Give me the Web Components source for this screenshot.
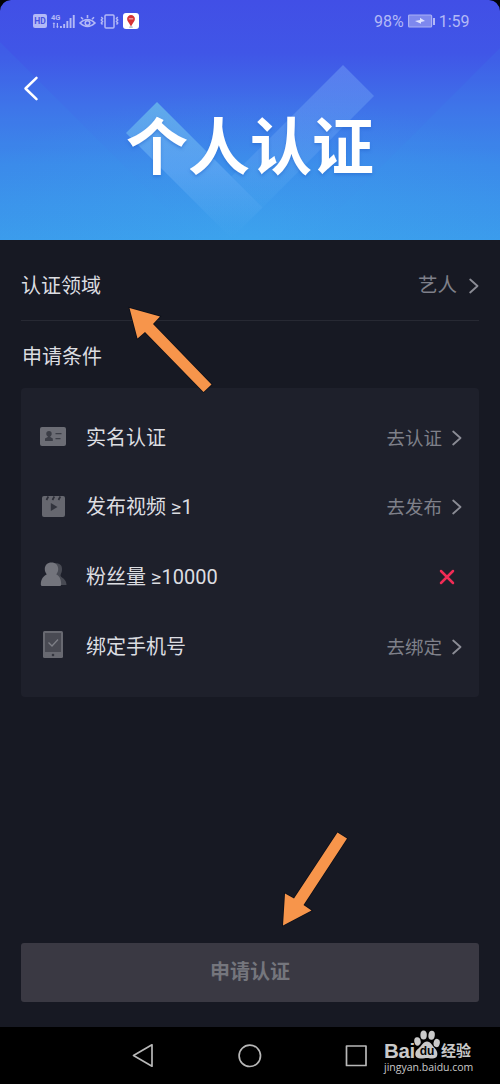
<!DOCTYPE html>
<html lang="zh-CN">
<head>
<meta charset="utf-8">
<title>个人认证</title>
<style>
html,body{margin:0;padding:0;background:#000}
body{width:500px;height:1084px;overflow:hidden;font-family:Roboto,"Noto Sans CJK SC",sans-serif;color:#dcdde1}
</style>
</head>
<body>
<cert-page></cert-page>
<script>
const define = (name, html) => {
  const t = document.createElement('template');
  t.innerHTML = html;
  customElements.define(name, class extends HTMLElement {
    constructor() {
      super();
      this.attachShadow({mode: 'open'}).appendChild(t.content.cloneNode(true));
    }
  });
};

define('status-bar', `
<style>
:host{display:flex;box-sizing:border-box;height:42px;padding:0 30.5px 0 33px;justify-content:space-between;align-items:center;color:#b3b9f6;font-size:16px;line-height:20px}
.right{display:flex;align-items:center;gap:4px}
.right span{padding-top:1px}
svg{display:block;flex:none}
.hd{display:flex;align-items:center;justify-content:center;width:14px;height:14px;border-radius:2px;background:#b3b9f6;color:#4652e2;font-size:8.500px;font-weight:700;line-height:14px}
.left{display:flex;align-items:center}
.g{width:24px;margin:0 4px 0 4px;display:grid;grid-template-columns:1fr}
.g>*{grid-area:1/1}
.g span{font-size:7.500px;line-height:7px;font-weight:700;align-self:start}
</style>
<div class="left">
  <span class="hd">HD</span>
  <span class="g"><span>4G</span>
  <svg width="24" height="15" viewBox="0 0 24 15" fill="#b3b9f6"><path d="M1.500 10L2.900 8.300 4.300 10H3.500v4H2.300v-4zM5.800 9H7v3.500h.8L6.400 14.300 5 12.500h.8z"/><path d="M9 12h1.900v2H9zM12.200 10h1.900v4h-1.900zM15.400 7h1.900v7h-1.900zM18.600 4h1.900v10h-1.900zM21.800 1h1.900v13h-1.900z"/></svg></span>
  <svg width="17" height="15" viewBox="0 0 17 15" fill="none" stroke="#b3b9f6" stroke-width="1.600"><path d="M1 9Q8.500 2 16 9Q8.500 16 1 9zM2 3.300l2 2M8.500 1v3M15 3.300l-2 2"/><circle cx="8.500" cy="9" r="2.300"/></svg>
  <svg style="margin-left:4px" width="19" height="15" viewBox="0 0 19 15" fill="none" stroke="#b3b9f6" stroke-width="1.500"><rect x="5" y="1" width="9" height="13" rx="1"/><path d="M1.300 3l1.200 1.500-1.200 1.500 1.200 1.500-1.200 1.500 1.200 1.500M17.700 3l-1.200 1.500 1.200 1.500-1.200 1.500 1.200 1.500-1.200 1.500"/></svg>
  <svg style="margin-left:4px" width="16" height="16" viewBox="0 0 16 16"><rect width="16" height="16" rx="3" fill="#fff"/><path d="M8 2a3.900 3.900 0 0 1 3.900 4C11.900 8.400 9.600 10 8 13.500 6.400 10 4.100 8.400 4.100 6A3.900 3.900 0 0 1 8 2z" fill="#d63337"/><path d="M5.800 5.800h4.400" stroke="#f3a2a2" stroke-width="1.300"/><ellipse cx="8" cy="14" rx="2" ry=".6" fill="#8090a0"/></svg>
</div>
<div class="right"><span>98%</span>
<svg width="27" height="14" viewBox="0 0 27 14"><rect x=".6" y="1" width="23" height="12" rx="1" fill="#7e88ee" stroke="#a9b0f4" stroke-width="1.200"/><rect x="25" y="4" width="2" height="7" fill="#b3b9f6"/><path d="M7 7l5-1V3.800l5 3.200-4 1v1.800z" fill="#dfe2ff"/></svg>
<span>1:59</span></div>`);

define('hero-header', `
<style>
:host{display:grid;height:240px;overflow:hidden;background:linear-gradient(180deg,#414fe6 0%,#4056e7 22%,#3f70e9 44%,#3c88ea 68%,#3b9bec 100%)}
:host>*{grid-area:1/1}
.bg,.back{display:block}
.content{display:flex;flex-direction:column}
.back{margin:34px 0 0 23px}
h1{margin:10px 0 0;text-align:center;font:700 62px/62px "Noto Sans CJK SC",sans-serif;white-space:nowrap;color:#fff;text-shadow:0 2px 3px #2869cf88}
</style>
<svg class="bg" width="500" height="240" viewBox="0 0 500 240">
<defs>
<linearGradient id="r" x1="0" y1="0" x2="0" y2="1"><stop offset="0" stop-color="#84b3fa" stop-opacity=".38"/><stop offset=".65" stop-color="#71acf5" stop-opacity=".28"/><stop offset="1" stop-color="#71c4f5" stop-opacity="0.040"/></linearGradient>
<linearGradient id="l" x1="0" y1="0" x2="0" y2="1"><stop offset="0" stop-color="#72cbea" stop-opacity=".65"/><stop offset=".5" stop-color="#7bbafa" stop-opacity=".4"/><stop offset=".9" stop-color="#71baf5" stop-opacity="0.050"/><stop offset="1" stop-color="#71baf5" stop-opacity="0"/></linearGradient>
<radialGradient id="c" cx=".5" cy="1" r=".62"><stop offset="0" stop-color="#3eb6ef" stop-opacity=".3"/><stop offset="1" stop-color="#3cb0ee" stop-opacity="0"/></radialGradient>
</defs>
<path d="M0 42L198 240H0zM500 48L308 240H500z" fill="#3c9cf0" opacity=".1"/>
<rect width="500" height="240" fill="url(#c)"/>
<path d="M343 65L374 96 262.500 207.500 231.500 176.500z" fill="url(#r)"/>
<path d="M157 102L262.500 207.500 231.500 238.500 126 133z" fill="url(#l)"/>
<path d="M0 11V0H11Q1 1 0 11zM500 11V0H489Q499 1 500 11z" fill="#020308"/>
</svg>
<div class="content">
<status-bar></status-bar>
<svg class="back" width="16" height="26" viewBox="0 0 16 26" fill="none" stroke="#fff" stroke-width="2.500" stroke-linecap="round" stroke-linejoin="round"><path d="M13.500 1.800L2.500 12.500l11 10.700"/></svg>
<h1>个人认证</h1>
</div>`);

define('chevron-right', `
<style>:host{display:block;width:10px;height:16px}svg{display:block}</style>
<svg width="10" height="16" viewBox="0 0 10 16" fill="none" stroke="#8b8c95" stroke-width="1.800" stroke-linecap="round" stroke-linejoin="round"><path d="M1.200 1.500L8.500 8l-7.300 6.500"/></svg>`);

define('field-row', `
<style>
:host{display:flex;box-sizing:border-box;height:81px;margin:0 21px;padding:12px 0 0 0;justify-content:space-between;align-items:center;border-bottom:1px solid #272933;font-size:20px;line-height:30px}
.v{display:flex;align-items:center;gap:12px;font-size:19.500px;color:#7f808a}
</style>
<slot name="label"></slot><span class="v"><slot></slot><chevron-right></chevron-right></span>`);

define('condition-row', `
<style>
:host{display:flex;align-items:center;height:69.600px;font-size:20px;line-height:30px}
.i{display:flex;width:28px;justify-content:center;margin-right:19px;position:relative;top:-1px}
.l{flex:1;white-space:pre}
.v{display:flex;align-items:center;gap:10px;font-size:18.500px;color:#7f808a}
::slotted(span){padding-top:2px}
::slotted(svg){display:block}
</style>
<span class="i"><slot name="icon"></slot></span><span class="l"><slot></slot></span><span class="v"><slot name="action"></slot></span>`);

define('condition-card', `
<style>:host{display:block;box-sizing:border-box;height:309px;margin:0 21px;padding:15px 17px 0 18px;border-radius:4px;background:#1e202b}</style><slot></slot>`);

define('submit-button', `
<style>:host{display:block;margin:246px 21px 0}
button{display:block;width:100%;height:59px;border:0;border-radius:3px;background:#3a3943;color:#75767d;font:700 20px/55px "Noto Sans CJK SC",sans-serif;padding:0 0 4px}</style>
<button><slot></slot></button>`);

define('baidu-mark', `
<style>
:host{display:block;width:92px;color:#c9c9c9}
.top{display:flex;height:29px;align-items:flex-end}
.b{font:700 20.500px/20px "Liberation Sans",sans-serif;width:30px;letter-spacing:-.3px;padding-top:2px;height:18px}
.p{display:grid;width:26px;height:29px;justify-items:center}
.p>*{grid-area:1/1}
.p span{color:#050505;font:700 12px/14px "Liberation Sans",sans-serif;align-self:end;margin-bottom:1px;z-index:1}
.j{font:700 15px/15px "Noto Sans CJK SC",sans-serif;margin:0 0 2px 1px;white-space:nowrap}
.u{font:10.500px/14px "Open Sans","Noto Sans",sans-serif;white-space:nowrap;margin-top:1px}
svg{display:block}
</style>
<div class="top"><span class="b">Bai</span><span class="p">
<svg width="26" height="29" viewBox="0 0 26 29" fill="#c9c9c9"><ellipse cx="3.500" cy="11.500" rx="3.200" ry="4.200" transform="rotate(-10 3.500 11.500)"/><ellipse cx="9.600" cy="5" rx="3.200" ry="4.500"/><ellipse cx="17.600" cy="5.300" rx="3.200" ry="4.500" transform="rotate(8 17.600 5.300)"/><ellipse cx="22.700" cy="13" rx="3.100" ry="4.200" transform="rotate(12 22.700 13)"/><path d="M13 11.500c4 0 5 4 8 7s4 9.500-2 10c-3 .3-4-.5-6-.5s-4 .8-7 .5C0 28 0 21.500 4.500 18.500 8 15.500 9 11.500 13 11.500z"/></svg><span>du</span></span><span class="j">经验</span></div>
<div class="u">jingyan.baidu.com</div>`);

define('nav-bar', `
<style>
:host{display:flex;height:57px;margin-top:25px;background:#000}
svg{display:block}
baidu-mark{margin:3px 0 0 10px}
</style>
<svg width="374" height="57" viewBox="0 0 374 57" fill="none" stroke="#b8b8b8" stroke-width="1.700" stroke-linejoin="round"><path d="M152 17.800V39.200L133.500 28.500z"/><circle cx="249.800" cy="28.800" r="10.700"/><rect x="346.500" y="19" width="19.500" height="19.500"/></svg>
<baidu-mark></baidu-mark>`);

define('pointer-arrows', `
<style>:host{position:absolute;left:0;top:0;pointer-events:none}svg{display:block}</style>
<svg width="500" height="1084" viewBox="0 0 500 1084" fill="#f7954b" stroke="#090b16" stroke-opacity=".7" stroke-width="1.600" paint-order="stroke"><path d="M129.500 308L160 316.500 153 324 211.500 384.500 203.500 392 145 332 137.500 338.500z"/><path d="M283 925.500L285 893.500 294 898.500 337.500 832.500 347 838.500 303.500 905 311.500 910.500z"/></svg>`);

define('cert-page', `
<style>
:host{display:block;position:relative;width:500px;height:1084px;overflow:hidden;background:#171923}
h2{box-sizing:border-box;height:67px;margin:0;padding:21px 22px 0;font-size:20px;line-height:30px;font-weight:400}
</style>
<hero-header></hero-header>
<field-row><span slot="label">认证领域</span>艺人</field-row>
<h2>申请条件</h2>
<condition-card>
<condition-row><svg slot="icon" width="26" height="19" viewBox="0 0 26 19"><rect width="26" height="19" rx="2" fill="#6c6d75"/><circle cx="9" cy="6.800" r="2.700" fill="#3b3d46"/><path d="M7.800 8h2.500v2l2.500 1.500V14H5v-2.500L7.800 10zM15.500 6h6v1.300h-6zM15.500 11h5v1.300h-5z" fill="#3b3d46"/></svg>实名认证<span slot="action">去认证</span><chevron-right slot="action"></chevron-right></condition-row>
<condition-row><svg slot="icon" width="23" height="21" viewBox="0 0 23 21"><rect width="23" height="21" rx="2" fill="#66676f"/><path d="M4.500 4L6.300.5M10.500 4L12.300.5M16.500 4L18.300.5" stroke="#2c2e38" stroke-width="1.700"/><path d="M8.800 7L15.500 11l-6.700 4z" fill="#32343d"/></svg>发布视频 ≥1<span slot="action">去发布</span><chevron-right slot="action"></chevron-right></condition-row>
<condition-row><svg slot="icon" width="27" height="25" viewBox="0 0 27 25" style="position:relative;top:-1px"><path d="M13 1.500c6-1 9.500 1 9 6.500-.2 3-1.500 4-1.500 5.500 0 2 6 3 6 9.500H16z" fill="#484a53"/><path d="M11.500.5c4 0 6.700 2.700 6.700 6.700 0 2.500-1.200 4-2 5 3 1.500 5 4.500 5 10.300q0 1.500-1.500 1.500H2.200Q.8 24 .8 22.500c0-5.800 3-8.800 6-10.300-.8-1-2-2.500-2-5 0-4 2.700-6.700 6.700-6.700z" fill="#73747c"/></svg>粉丝量 ≥10000<svg slot="action" style="margin-right:7px" width="16" height="16" viewBox="0 0 16 16" fill="none" stroke="#f12c56" stroke-width="2.500" stroke-linecap="round"><path d="M2 2l12 12M14 2L2 14"/></svg></condition-row>
<condition-row><svg slot="icon" width="20" height="27" viewBox="0 0 20 27" style="position:relative;top:-1px"><rect width="20" height="27" rx="1.500" fill="#686971"/><rect x="2" y="2" width="16" height="19" fill="#494a53"/><path d="M5.500 11.500l3.500 3.500 6-6.500" stroke="#7e7f87" stroke-width="1.300" fill="none"/><circle cx="10" cy="24" r="1.300" fill="#34363f"/></svg>绑定手机号<span slot="action">去绑定</span><chevron-right slot="action"></chevron-right></condition-row>
</condition-card>
<submit-button>申请认证</submit-button>
<nav-bar></nav-bar>
<pointer-arrows></pointer-arrows>`);
</script>
</body>
</html>
